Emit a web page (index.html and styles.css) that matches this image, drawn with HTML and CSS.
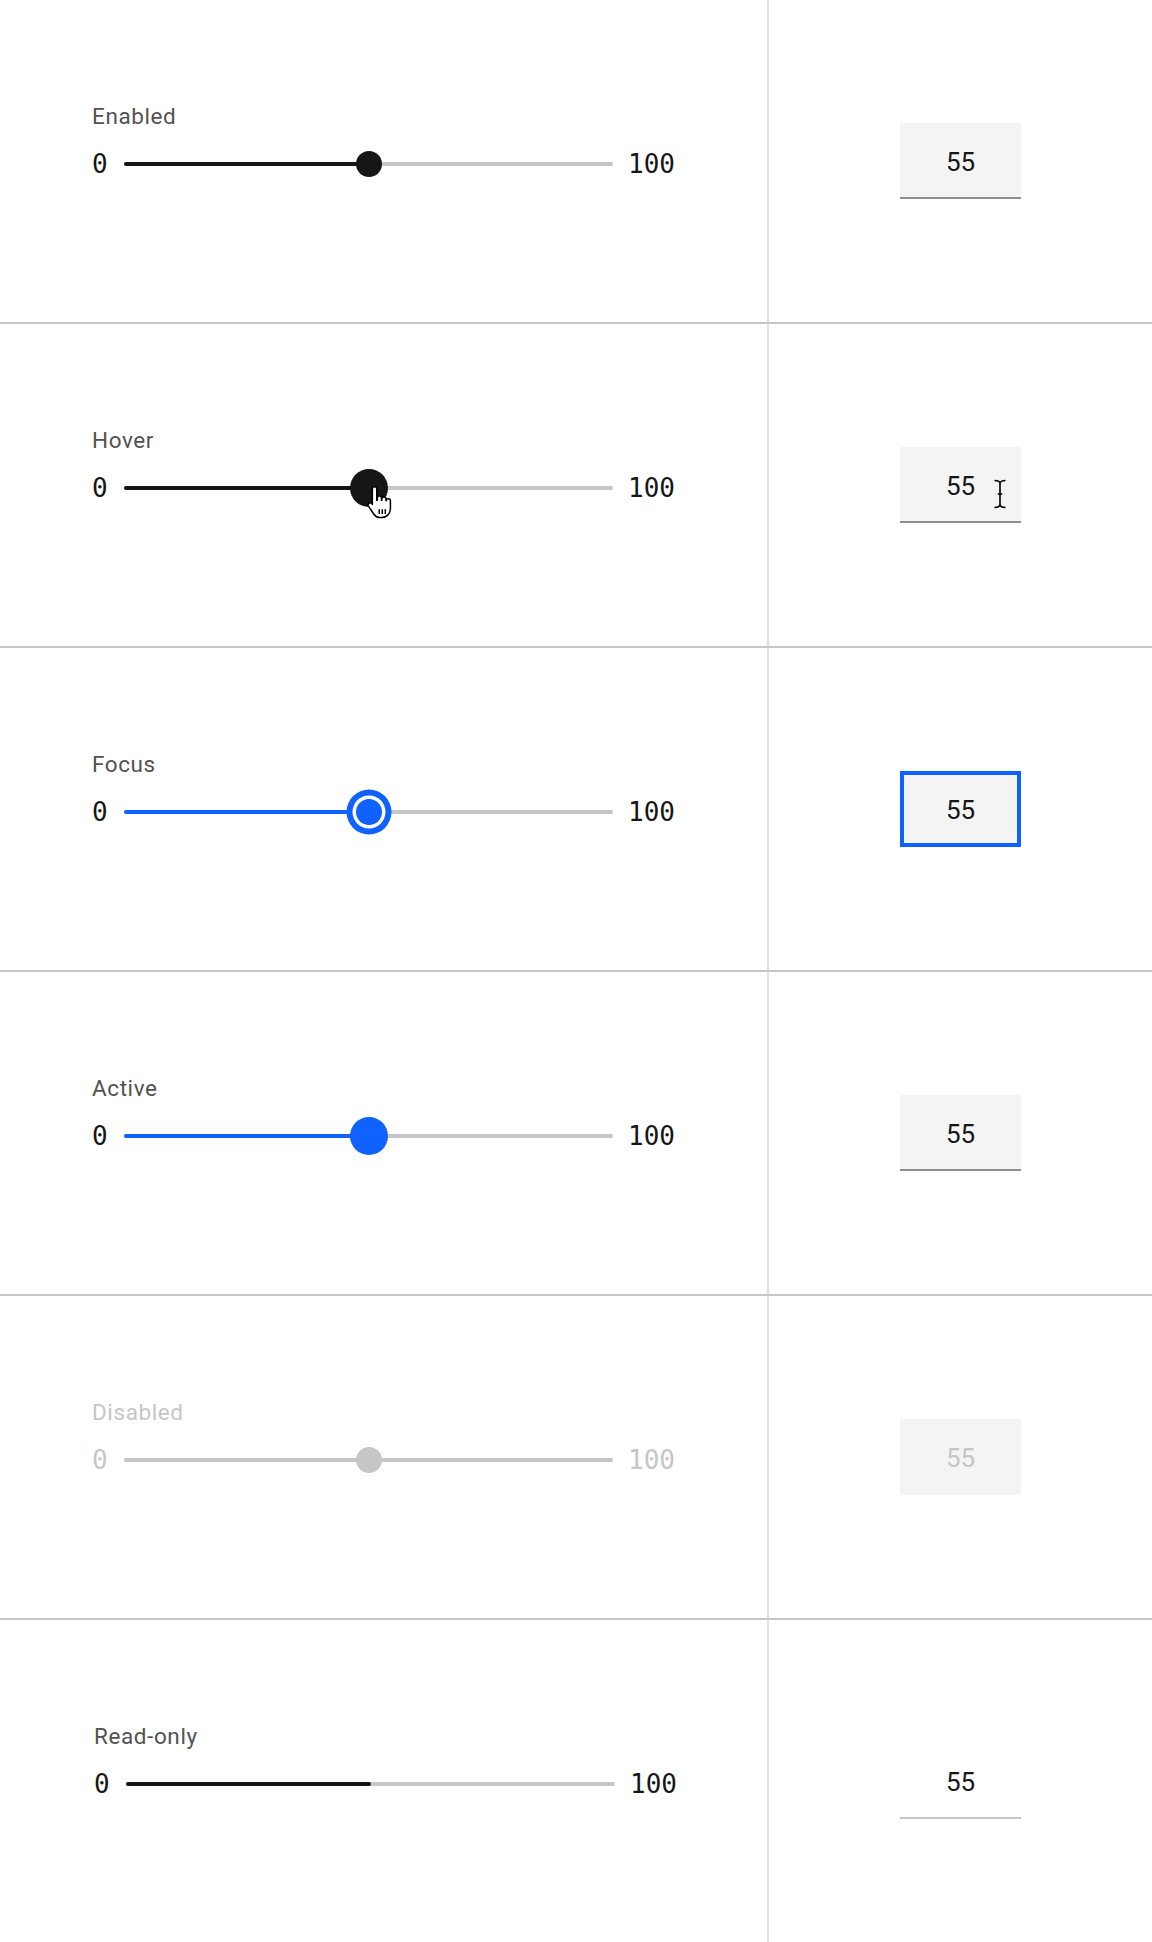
FILE: index.html
```html
<!DOCTYPE html>
<html lang="en">
<head>
<meta charset="utf-8">
<title>Slider states</title>
<link rel="stylesheet" href="styles.css">
</head>
<body>
<main class="board">

  <section class="row">
    <div class="cell cell--slider">
      <div class="slider">
        <div class="slider__label">Enabled</div>
        <div class="slider__body">
          <span class="slider__range">0</span>
          <div class="slider__track">
            <div class="slider__fill" style="width:50%"></div>
            <div class="slider__thumb" style="left:50%"></div>
          </div>
          <span class="slider__range">100</span>
        </div>
      </div>
    </div>
    <div class="cell cell--input">
      <div class="num">55</div>
    </div>
  </section>

  <section class="row">
    <div class="cell cell--slider">
      <div class="slider slider--hover">
        <div class="slider__label">Hover</div>
        <div class="slider__body">
          <span class="slider__range">0</span>
          <div class="slider__track">
            <div class="slider__fill" style="width:50%"></div>
            <div class="slider__thumb" style="left:50%"></div>
            <svg class="hand" style="left:50%" viewBox="0 0 20 26" width="27.6" height="35.9" aria-hidden="true">
              <path d="M6.2 1.2c.9 0 1.6.7 1.6 1.6V11h.4V9.4c0-.8.7-1.5 1.5-1.5s1.5.7 1.5 1.5V11h.3V10.2c0-.8.7-1.5 1.5-1.5s1.5.7 1.5 1.5V11.4h.2c0-.8.7-1.4 1.5-1.4s1.5.7 1.5 1.5V17c0 3.6-2.6 6.6-6.2 6.6H10c-1.9 0-3.3-.9-4.3-2.4L1.8 15.3c-.5-.7-.3-1.7.4-2.1.7-.4 1.5-.3 2 .3l.4.6V2.8c0-.9.7-1.6 1.6-1.6z" fill="#fff" stroke="#000" stroke-width="1.1" stroke-linejoin="round"/>
              <path d="M9.6 17.5v3.6M11.8 17.5v3.6M14 17.5v3.6" stroke="#000" stroke-width="1.1"/>
            </svg>
          </div>
          <span class="slider__range">100</span>
        </div>
      </div>
    </div>
    <div class="cell cell--input">
      <div class="num num--hover">55
        <svg class="ibeam" viewBox="0 0 14 30" width="14" height="30" aria-hidden="true">
          <path d="M1.5 1.5c2.8 0 5.5.8 5.5 3.2 0-2.4 2.7-3.2 5.5-3.2M7 4.7v20.6M1.5 28.5c2.8 0 5.5-.8 5.5-3.2 0 2.4 2.7 3.2 5.5 3.2M4.8 15h4.4" fill="none" stroke="#000" stroke-width="1.6"/>
        </svg>
      </div>
    </div>
  </section>

  <section class="row">
    <div class="cell cell--slider">
      <div class="slider slider--focus">
        <div class="slider__label">Focus</div>
        <div class="slider__body">
          <span class="slider__range">0</span>
          <div class="slider__track">
            <div class="slider__fill" style="width:50%"></div>
            <div class="slider__thumb" style="left:50%"></div>
          </div>
          <span class="slider__range">100</span>
        </div>
      </div>
    </div>
    <div class="cell cell--input">
      <div class="num num--focus">55</div>
    </div>
  </section>

  <section class="row">
    <div class="cell cell--slider">
      <div class="slider slider--active">
        <div class="slider__label">Active</div>
        <div class="slider__body">
          <span class="slider__range">0</span>
          <div class="slider__track">
            <div class="slider__fill" style="width:50%"></div>
            <div class="slider__thumb" style="left:50%"></div>
          </div>
          <span class="slider__range">100</span>
        </div>
      </div>
    </div>
    <div class="cell cell--input">
      <div class="num">55</div>
    </div>
  </section>

  <section class="row">
    <div class="cell cell--slider">
      <div class="slider slider--disabled">
        <div class="slider__label">Disabled</div>
        <div class="slider__body">
          <span class="slider__range">0</span>
          <div class="slider__track">
            <div class="slider__fill" style="width:50%"></div>
            <div class="slider__thumb" style="left:50%"></div>
          </div>
          <span class="slider__range">100</span>
        </div>
      </div>
    </div>
    <div class="cell cell--input">
      <div class="num num--disabled">55</div>
    </div>
  </section>

  <section class="row">
    <div class="cell cell--slider">
      <div class="slider slider--readonly">
        <div class="slider__label">Read-only</div>
        <div class="slider__body">
          <span class="slider__range">0</span>
          <div class="slider__track">
            <div class="slider__fill" style="width:50%"></div>
          </div>
          <span class="slider__range">100</span>
        </div>
      </div>
    </div>
    <div class="cell cell--input">
      <div class="num num--readonly">55</div>
    </div>
  </section>

</main>
</body>
</html>
```

FILE: styles.css
```css
* {
  box-sizing: border-box;
  margin: 0;
  padding: 0;
}

body {
  margin: 0;
  background: #ffffff;
}

.board {
  width: 1152px;
  height: 1942px;
  display: flex;
  flex-direction: column;
  background: #ffffff;
}

.row {
  display: grid;
  grid-template-columns: 769px 1fr;
  height: 324px;
  flex: none;
  border-bottom: 2px solid #c6c6c6;
}

.row:last-child {
  height: 322px;
  border-bottom: 0;
}

.cell--slider {
  border-right: 2px solid #e0e0e0;
  padding: 101px 0 0 92px;
}

.cell--input {
  display: flex;
  align-items: center;
  justify-content: center;
}

/* slider */
.slider__label {
  font-family: Roboto, "Liberation Sans", sans-serif;
  font-size: 22.5px;
  line-height: 30px;
  letter-spacing: 0.6px;
  color: #525252;
}

.slider__body {
  display: flex;
  align-items: center;
  height: 40px;
  margin-top: 13px;
}

.slider__range {
  font-family: "DejaVu Sans Mono", "Liberation Mono", monospace;
  font-size: 26px;
  line-height: 40px;
  color: #161616;
}

.slider__track {
  position: relative;
  width: 489px;
  height: 4px;
  margin: 0 15px 0 16.4px;
  background: #c6c6c6;
  border-radius: 2px;
}

.slider__fill {
  position: absolute;
  left: 0;
  top: 0;
  height: 100%;
  background: #161616;
  border-radius: 2px;
}

.slider__thumb {
  position: absolute;
  top: 50%;
  width: 26px;
  height: 26px;
  border-radius: 50%;
  background: #161616;
  transform: translate(-50%, -50%);
}

.slider--hover .slider__thumb {
  width: 38px;
  height: 38px;
}

.hand {
  position: absolute;
  top: -1px;
  margin-left: -3px;
}

.slider--focus .slider__fill {
  background: #0f62fe;
}

.slider--focus .slider__thumb {
  background: #0f62fe;
  box-shadow: 0 0 0 3.5px #ffffff, 0 0 0 9.5px #0f62fe;
}

.slider--active .slider__fill,
.slider--active .slider__thumb {
  background: #0f62fe;
}

.slider--active .slider__thumb {
  width: 38px;
  height: 38px;
}

.slider--disabled .slider__label,
.slider--disabled .slider__range {
  color: #c6c6c6;
}

.slider--disabled .slider__fill,
.slider--disabled .slider__thumb {
  background: #c6c6c6;
}

.slider--readonly {
  padding-left: 2px;
}

/* number input */
.num {
  position: relative;
  width: 121px;
  height: 76px;
  padding-top: 3px;
  display: flex;
  align-items: center;
  justify-content: center;
  background: #f4f4f4;
  border-bottom: 2px solid #8d8d8d;
  font-family: Roboto, "Liberation Sans", sans-serif;
  font-size: 26px;
  color: #161616;
}

.num--focus {
  border: 4px solid #0f62fe;
  padding-top: 1px;
}

.num--disabled {
  border-bottom-color: transparent;
  color: #c6c6c6;
}

.num--readonly {
  background: transparent;
  border-bottom-color: #c6c6c6;
}

.ibeam {
  position: absolute;
  left: 93px;
  top: 32px;
}
```
